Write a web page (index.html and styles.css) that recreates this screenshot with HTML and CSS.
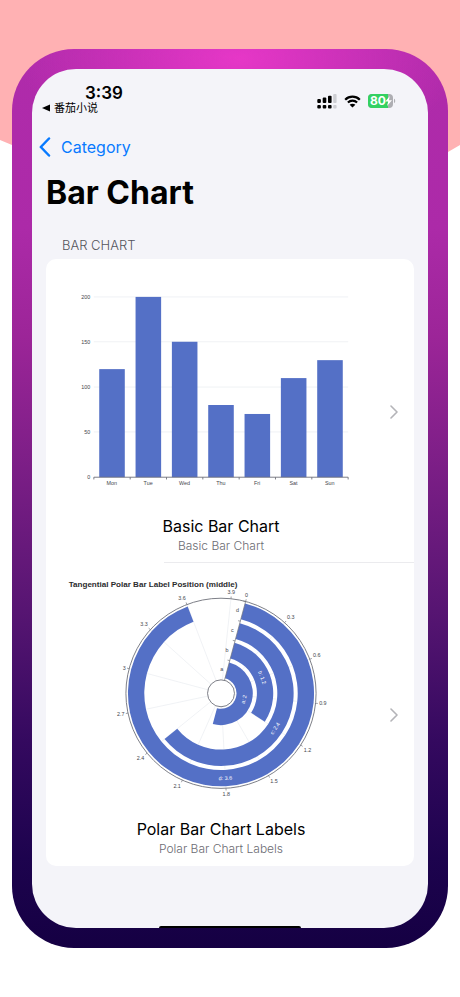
FILE: index.html
```html
<!DOCTYPE html>
<html lang="en">
  <head>
    <meta charset="utf-8">
    <meta name="viewport" content="width=device-width, initial-scale=1">
    <title>Bar Chart</title>
    <link rel="stylesheet" href="styles.css">
  </head>
  <body>
    <!-- pink shape behind the phone -->
    <svg class="backdrop" viewBox="0 0 460 160" preserveAspectRatio="none" aria-hidden="true">
      <path d="M0 0H460V145L448 152C310 215 120 195 12 145L0 140Z" fill="#ffb1b3"/>
    </svg>

    <div class="phone">
      <div class="screen">
        <header class="status">
          <div class="status-left">
            <span class="time">3:39</span>
            <a class="return" href="#"><svg width="8" height="8" viewBox="0 0 8 8" aria-hidden="true"><path d="M0 4L8 0.600V7.400Z"/></svg>番茄小说</a>
          </div>
          <div class="status-right">
            <svg width="20" height="15" viewBox="0 0 20 15" aria-label="Signal">
              <rect x="0.300" y="5" width="3.600" height="4" rx="1"/>
              <rect x="5.700" y="3.500" width="3.600" height="5.500" rx="1"/>
              <rect x="11" y="1.800" width="3.600" height="7.200" rx="1"/>
              <rect x="16.200" y="0" width="3.400" height="9" rx="1" fill="#cdced3"/>
              <rect x="0.300" y="11" width="3.600" height="3.400" rx="1"/>
              <rect x="5.700" y="11" width="3.600" height="3.400" rx="1"/>
              <rect x="11" y="11" width="3.600" height="3.400" rx="1"/>
              <rect x="16.200" y="11" width="3.400" height="3.400" rx="1" fill="#cdced3"/>
            </svg>
            <svg width="17" height="13" viewBox="0 0 17 13" aria-label="Wi-Fi">
              <path d="M1.200 4.700C5.300 0.700 11.700 0.700 15.800 4.700M3.900 7.500C6.500 5.100 10.500 5.100 13.100 7.500" fill="none" stroke="#000" stroke-width="2.200"/>
              <path d="M5.600 9.700C7.200 8.300 9.800 8.300 11.400 9.700L8.500 12.600Z"/>
            </svg>
            <svg class="battery" width="28" height="14" viewBox="0 0 28 14" aria-label="Battery">
              <rect x="0" y="0" width="25" height="14" rx="4" fill="#aeaeb3"/>
              <path d="M4 0H20V14H4A4 4 0 0 1 0 10V4A4 4 0 0 1 4 0Z" fill="#33d162"/>
              <path d="M26 4.800C27.600 5.300 27.600 8.700 26 9.200Z" fill="#aeaeb3"/>
              <path d="M21.800 2L17.300 7.600H20.200L19 12L24 6.200H20.900Z" fill="#fff"/>
              <text x="2" y="11">80</text>
            </svg>
          </div>
        </header>

        <nav class="nav">
          <a class="back" href="#">
            <svg width="12" height="20" viewBox="0 0 12 20" aria-hidden="true"><path d="M10 1.500L1.800 10L10 18.500" fill="none" stroke="#087aff" stroke-width="2.500" stroke-linecap="round" stroke-linejoin="round"/></svg>
            Category
          </a>
        </nav>

        <main>
          <h1>Bar Chart</h1>
          <h2>BAR CHART</h2>

          <div class="list">
            <a class="row" href="#">
              <div class="row-content">
                <svg class="chart" viewBox="0 0 709 532" aria-label="Basic Bar Chart">
                  <g stroke="#e8ebf0" stroke-width="1.500">
                    <path d="M71 60H638M71 160H638M71 261H638M71 361H638"/>
                  </g>
                  <g fill="#5470c6">
                    <rect x="83" y="221" width="57" height="241"/>
                    <rect x="164" y="60" width="57" height="402"/>
                    <rect x="245" y="160" width="57" height="302"/>
                    <rect x="326" y="301" width="57" height="161"/>
                    <rect x="407" y="321" width="57" height="141"/>
                    <rect x="488" y="241" width="57" height="221"/>
                    <rect x="569" y="201" width="57" height="261"/>
                  </g>
                  <path d="M71 462H638M71 462v5M152 462v5M233 462v5M314 462v5M395 462v5M476 462v5M557 462v5M638 462v5" fill="none" stroke="#6e7079" stroke-width="2"/>
                  <g text-anchor="end">
                    <text x="63" y="64">200</text>
                    <text x="63" y="164">150</text>
                    <text x="63" y="265">100</text>
                    <text x="63" y="365">50</text>
                    <text x="63" y="466">0</text>
                  </g>
                  <g text-anchor="middle">
                    <text x="111" y="479">Mon</text>
                    <text x="192" y="479">Tue</text>
                    <text x="273" y="479">Wed</text>
                    <text x="354" y="479">Thu</text>
                    <text x="435" y="479">Fri</text>
                    <text x="516" y="479">Sat</text>
                    <text x="597" y="479">Sun</text>
                  </g>
                </svg>
                <span class="row-title">Basic Bar Chart</span>
                <span class="row-subtitle">Basic Bar Chart</span>
              </div>
              <svg class="chevron" width="8" height="14" viewBox="0 0 8 14" aria-hidden="true"><path d="M1 1L7 7L1 13"/></svg>
            </a>

            <hr>

            <a class="row" href="#">
              <div class="row-content">
                <svg class="chart" id="polar" viewBox="0 0 709 532" aria-label="Polar Bar Chart Labels">
                  <text class="chart-title" x="15" y="29">Tangential Polar Bar Label Position (middle)</text>
                </svg>
                <span class="row-title">Polar Bar Chart Labels</span>
                <span class="row-subtitle">Polar Bar Chart Labels</span>
              </div>
              <svg class="chevron" width="8" height="14" viewBox="0 0 8 14" aria-hidden="true"><path d="M1 1L7 7L1 13"/></svg>
            </a>
          </div>
        </main>

        <div class="home"></div>
      </div>
    </div>

    <script src="polar.js"></script>
  </body>
</html>
```

FILE: styles.css
```css
* {
  box-sizing: border-box;
}

body {
  margin: 0;
  padding: 49px 12px;
  background: #fff;
  font-family: Inter, "Noto Sans CJK SC", sans-serif;
  color: #000;
}

a {
  color: inherit;
  text-decoration: none;
}

svg {
  display: block;
  flex: none;
}

.backdrop {
  position: absolute;
  top: 0;
  left: 0;
  width: 100%;
  height: 160px;
}

.phone {
  position: relative;
  padding: 20px;
  border-radius: 62px;
  background:
    radial-gradient(ellipse 220px 110px at 52% 1%, #e637c7, rgba(230, 55, 199, 0)),
    linear-gradient(#b02bab 0%, #ac2aa8 20%, #9c2598 32%, #7f1f88 45%, #531470 64%, #34095f 77%, #1d034e 90%, #150043 100%);
}

.screen {
  display: flex;
  flex-direction: column;
  overflow: hidden;
  border-radius: 44px;
  background: #f4f4f9;
}

/* status bar */
.status {
  display: flex;
  justify-content: space-between;
  padding: 15px 32px 0 10px;
}

.status-left {
  display: flex;
  flex-direction: column;
}

.time {
  padding-left: 43px;
  font-size: 17px;
  font-weight: 600;
  line-height: 18px;
}

.return {
  display: flex;
  align-items: center;
  gap: 4px;
  font-size: 11px;
  font-weight: 400;
  line-height: 12px;
}

.status-right {
  display: flex;
  align-items: center;
  gap: 7px;
  padding-top: 4px;
}

.battery text {
  font-size: 12px;
  font-weight: 700;
  fill: #fff;
}

/* navigation */
.nav {
  display: flex;
  padding: 21px 7px 0;
}

.back {
  display: flex;
  align-items: center;
  gap: 10px;
  font-size: 16px;
  line-height: 24px;
  color: #087aff;
}

main {
  padding: 0 14px 60px;
}

h1 {
  margin: 14px 0 0;
  font-size: 32px;
  font-weight: 700;
  line-height: 40px;
}

h2 {
  margin: 24px 16px 6px;
  font-size: 13px;
  font-weight: 300;
  line-height: 16px;
  color: #55555c;
}

/* chart list */
.list {
  padding-bottom: 1px;
  border-radius: 10px;
  background: #fff;
}

.row {
  display: flex;
  align-items: center;
  gap: 10px;
  padding: 11px 16px 8px;
}

.row-content {
  display: flex;
  flex: 1;
  flex-direction: column;
  align-items: center;
}

.row-title {
  margin-top: 6px;
  font-size: 16px;
  line-height: 22px;
}

.row-subtitle {
  font-size: 12px;
  font-weight: 300;
  line-height: 17px;
  color: #6c6c73;
}

hr {
  height: 1px;
  margin: 0 0 0 32%;
  border: 0;
  background: #ebebee;
}

.chevron path {
  fill: none;
  stroke: #b4b4b8;
  stroke-width: 1.6;
  stroke-linecap: round;
  stroke-linejoin: round;
}

/* charts */
.chart {
  width: 100%;
}

.chart text {
  font-family: "Liberation Sans", Arial, sans-serif;
  font-size: 12px;
  fill: #44464d;
}

.chart .chart-title {
  font-size: 18px;
  font-weight: 700;
  fill: #2c2c2e;
}

.chart .bar-label {
  fill: #fff;
}

.home {
  width: 36%;
  height: 2px;
  margin: 0 auto;
  border-radius: 2px 2px 0 0;
  background: #000;
}
```

FILE: polar.js
```js
// polar bar chart, values from 0 to 4 clockwise from 15 degrees past the top
var svg = document.getElementById('polar');
var cx = 354.5, cy = 266, inner = 30, outer = 212, start = 15, max = 4;
var data = [['a', 2], ['b', 1.2], ['c', 2.4], ['d', 3.6]];
var band = (outer - inner) / data.length;

function point(r, deg) {
  var rad = deg * Math.PI / 180;
  return [cx + r * Math.sin(rad), cy - r * Math.cos(rad)];
}

function angle(value) {
  return start + value / max * 360;
}

function add(name, attrs, text) {
  var el = document.createElementNS('http://www.w3.org/2000/svg', name);
  for (var key in attrs) el.setAttribute(key, attrs[key]);
  if (text) el.textContent = text;
  svg.appendChild(el);
}

function line(a, b, color, width) {
  add('path', { d: 'M' + a + 'L' + b, stroke: color, 'stroke-width': width });
}

// ticks, split lines and their labels
for (var i = 0; i <= 13; i++) {
  var value = i * 3 / 10;
  var deg = angle(value);
  line(point(inner, deg), point(outer, deg), '#e8ebf0', 1.5);
  line(point(outer, deg), point(outer + 5, deg), '#6e7079', 1.5);
  var p = point(outer + 8, deg);
  var dx = (p[0] - cx) / outer, dy = (p[1] - cy) / outer;
  var anchor = Math.abs(dx) < 0.3 ? 'middle' : dx > 0 ? 'start' : 'end';
  var shift = Math.abs(dy) < 0.3 ? 4 : dy > 0 ? 10 : -2;
  add('text', { x: p[0], y: p[1] + shift, 'text-anchor': anchor }, String(value));
}

// bars
data.forEach(function (item, i) {
  var r1 = inner + band * (i + 0.1), r2 = inner + band * (i + 0.9);
  var end = angle(item[1]);
  var large = end - start > 180 ? 1 : 0;
  add('path', {
    d: 'M' + point(r1, start) + 'L' + point(r2, start) +
      'A' + r2 + ' ' + r2 + ' 0 ' + large + ' 1 ' + point(r2, end) +
      'L' + point(r1, end) +
      'A' + r1 + ' ' + r1 + ' 0 ' + large + ' 0 ' + point(r1, start) + 'Z',
    fill: '#5470c6'
  });
});

// axes
add('circle', { cx: cx, cy: cy, r: inner, fill: 'none', stroke: '#6e7079', 'stroke-width': 2 });
add('circle', { cx: cx, cy: cy, r: outer, fill: 'none', stroke: '#6e7079', 'stroke-width': 2 });
line(point(inner, start), point(outer, start), '#6e7079', 1.5);

data.forEach(function (item, i) {
  var mid = inner + band * (i + 0.5);
  var tick = point(inner + band * (i + 1), start);
  line(tick, [tick[0] - 5, tick[1] - 1], '#6e7079', 1.5);

  var p = point(mid, start);
  add('text', { x: p[0] - 12, y: p[1] + 2, 'text-anchor': 'middle' }, item[0]);

  // value label follows the arc
  var deg = (start + angle(item[1])) / 2;
  var c = point(mid, deg);
  var turn = deg > 90 ? deg - 180 : deg;
  add('text', {
    'class': 'bar-label',
    x: c[0], y: c[1] + 4, 'text-anchor': 'middle',
    transform: 'rotate(' + turn + ' ' + c + ')'
  }, item[0] + ': ' + item[1]);
});
```
